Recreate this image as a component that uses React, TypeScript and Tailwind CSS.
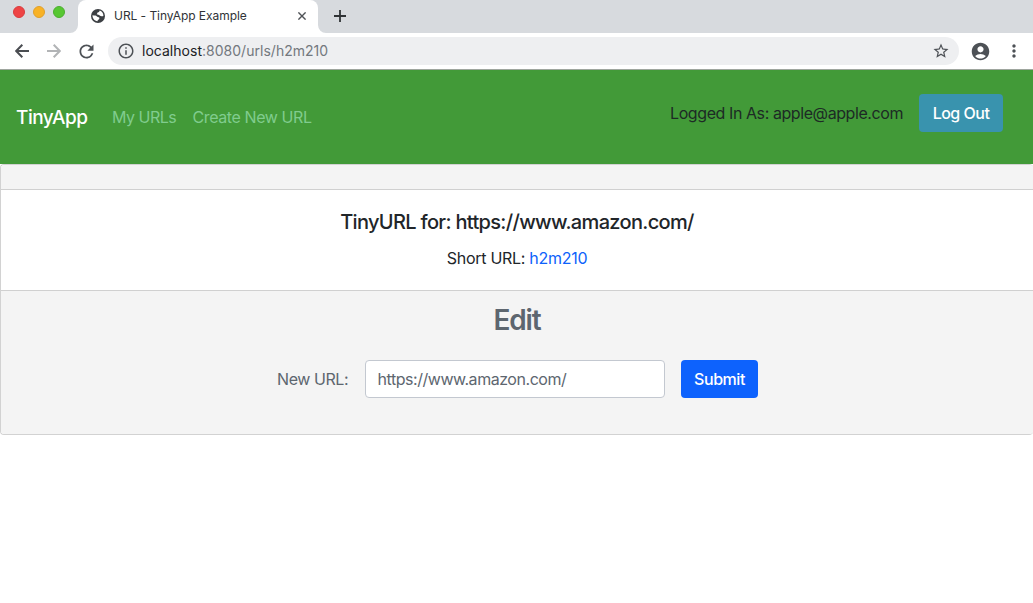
import React from "react";
import {
  MdAccountCircle,
  MdArrowBack,
  MdArrowForward,
  MdInfoOutline,
  MdMoreVert,
  MdRefresh,
  MdStarBorder,
} from "react-icons/md";

function GlobeIcon() {
  return (
    <svg className="size-[14px]" viewBox="0 0 14 14">
      <circle cx="7" cy="7" r="7" fill="#3c3f43" />
      <path d="M8.7 1.6c-.3 1.4-.9 1.7-2.1 2-.6.5-.2 1.3-.9 1.7 1.2.5 2.3.4 3 1.2.8.8 2.3.9 3.7.4.1-2.500-1.500-4.600-3.700-5.300z" fill="#fff" />
      <path d="M1.500 6.300c-.2 2.900 1.900 5.700 5 6 .3-.7 0-1.300.9-1.600 1-.4 1.100-1.100.9-1.900-.3-.9-1.300-.6-2-1.100-.8-.8-1.500-1.300-2.600-1.300-.8 0-1.500.1-2.200-.1z" fill="#fff" />
    </svg>
  );
}

function TabStrip() {
  return (
    <div className="flex h-[33px] bg-[#d7dade]">
      <div className="flex w-[70px] gap-2 pt-[6px] pl-[13px]">
        <span className="size-3 rounded-full border border-[#d93c3e] bg-[#ee4445]" />
        <span className="size-3 rounded-full border border-[#e0a02c] bg-[#f8b226]" />
        <span className="size-3 rounded-full border border-[#4cae30] bg-[#57c732]" />
      </div>
      <svg className="mt-auto size-2" viewBox="0 0 8 8" fill="#fff">
        <path d="M8 0v8H0a8 8 0 0 0 8-8z" />
      </svg>
      <div className="flex w-[240px] items-center rounded-t-lg bg-white pr-[12px] pb-px pl-[13px]">
        <GlobeIcon />
        <span className="ml-[9px] text-[12px] tracking-[-0.05px] text-[#303337]">URL - TinyApp Example</span>
        <svg className="ml-auto size-[8px]" viewBox="0 0 8 8" stroke="#505357" strokeWidth="1.4">
          <path d="M.4.4l7.200 7.200M7.600.4L.4 7.600" />
        </svg>
      </div>
      <svg className="mt-auto size-2" viewBox="0 0 8 8" fill="#fff">
        <path d="M0 0v8h8a8 8 0 0 1-8-8z" />
      </svg>
      <svg className="mt-[10px] ml-[8px] size-[12px]" viewBox="0 0 12 12" stroke="#2f3235" strokeWidth="1.8">
        <path d="M6 0v12M0 6h12" />
      </svg>
    </div>
  );
}

function Toolbar() {
  return (
    <div className="flex h-9 items-center bg-white text-[#4d5156]">
      <svg className="ml-[15px] size-[14px]" viewBox="0 0 14 14" fill="none" stroke="#4a4d52" strokeWidth="2">
        <path d="M14 7H1.500M7.300.8L1.200 7l6.100 6.200" />
      </svg>
      <svg className="ml-[18px] size-[14px]" viewBox="0 0 14 14" fill="none" stroke="#b2b4b6" strokeWidth="2">
        <path d="M0 7h12.500M6.700.8L12.800 7l-6.100 6.200" />
      </svg>
      <MdRefresh className="ml-[15px] size-[21px]" />
      <div className="ml-[11px] flex h-7 w-[851px] items-center rounded-full bg-[#eeeff1] pr-[9px] pl-[9px]">
        <MdInfoOutline className="size-[18px]" />
        <span className="ml-[7px] pb-px text-[14px] tracking-[0.02px] text-[#73787e]">
          <span className="text-[#202124]">localhost</span>:8080/urls/h2m210
        </span>
        <MdStarBorder className="ml-auto size-[18px]" />
      </div>
      <MdAccountCircle className="ml-[11px] size-[21px]" />
      <MdMoreVert className="ml-[13px] size-5" />
    </div>
  );
}

function Navbar() {
  return (
    <nav className="flex h-[94px] items-start bg-[#429a38]">
      <a className="mt-[33px] ml-4 w-[72px] text-[19px] leading-[30px] font-medium tracking-[-0.5px] whitespace-nowrap text-white">TinyApp</a>
      <a className="mt-[35px] ml-6 w-[64.5px] leading-6 tracking-[-0.5px] whitespace-nowrap text-[#80cc8e]">My URLs</a>
      <a className="mt-[35px] ml-4 leading-6 tracking-[-0.4px] whitespace-nowrap text-[#80cc8e]">Create New URL</a>
      <span className="mt-[31px] ml-auto leading-6 tracking-[-0.42px] whitespace-nowrap text-[#1d2a25]">
        Logged In As: apple@apple.com
      </span>
      <button className="mt-6 mr-[30px] ml-4 h-[38px] w-[84px] rounded bg-[#3993ae] font-medium tracking-[-0.5px] text-white">
        Log Out
      </button>
    </nav>
  );
}

function UrlCard() {
  return (
    <section className="flex h-[271px] flex-col overflow-hidden rounded border border-r-0 border-[#d2d2d2] bg-white text-center text-[#212529]">
      <div className="h-[25px] border-b border-[#d0d0d0] bg-[#f4f4f4]" />
      <div className="flex h-[100px] flex-col">
        <h5 className="mt-5 text-[20px] leading-6 font-[550] tracking-[-0.67px]">TinyURL for: https://www.amazon.com/</h5>
        <p className="mt-3 leading-6 tracking-[-0.28px]">
          Short URL: <a className="text-[#0d62fb]">h2m210</a>
        </p>
      </div>
      <div className="flex-1 border-t border-[#d0d0d0] bg-[#f4f4f4] text-[#5d666f]">
        <h3 className="mt-[12px] text-[28px] leading-[34px] font-semibold tracking-[-1.1px]">Edit</h3>
        <form className="mt-[23px] flex items-center pl-[276px]">
          <label className="w-[72px] text-left tracking-[-0.42px] whitespace-nowrap">New URL:</label>
          <input
            className="ml-[16px] h-[38px] w-[300px] rounded border border-[#c3c8d0] bg-white pr-[12px] pl-[11.5px] tracking-[-0.46px] placeholder:text-[#5d666f]"
            placeholder="https://www.amazon.com/"
          />
          <button type="button" className="ml-4 h-[38px] w-[77px] rounded bg-[#0d62fd] font-medium tracking-[-0.45px] text-white">
            Submit
          </button>
        </form>
      </div>
    </section>
  );
}

export default function App() {
  return (
    <div className="h-[603px] w-[1033px] overflow-hidden bg-white font-['Inter',sans-serif] text-[16px] font-[440]">
      <TabStrip />
      <Toolbar />
      <div className="h-px bg-[#9fa69e]" />
      <Navbar />
      <UrlCard />
    </div>
  );
}
